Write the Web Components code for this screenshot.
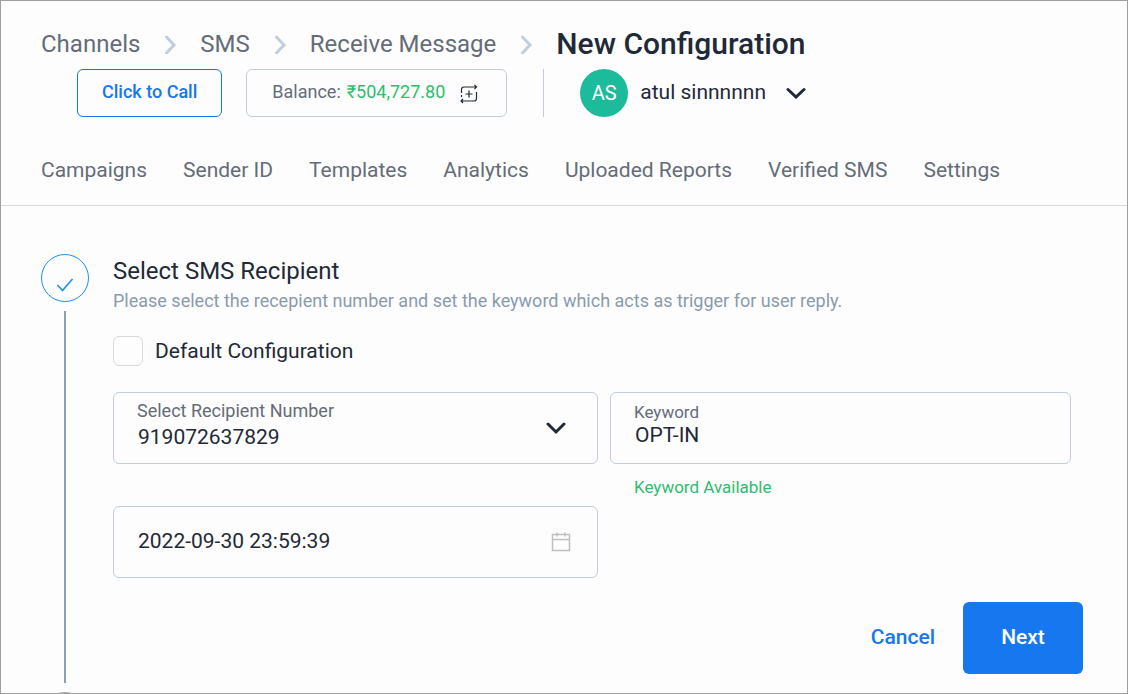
<!DOCTYPE html>
<html lang="en">
<head>
<meta charset="utf-8">
<title>New Configuration</title>
<style>
    body {
        margin: 0;
        background: #fdfdfd;
        color: #1f2937;
        font-family: Roboto, "Liberation Sans", sans-serif;
        font-size: 21px;
        line-height: 24px;
    }
</style>
</head>
<body>
<sms-app></sms-app>

<template id="sms-crumbs">
    <style>
        :host { display: block; }
        nav { display: flex; align-items: center; gap: 24px; height: 46px; padding-bottom: 2px; }
        a { color: #646c78; text-decoration: none; font-size: 24px; white-space: nowrap; }
        h1 { margin: 0; font-size: 30px; font-weight: 500; white-space: nowrap; }
        svg { width: 12px; height: 20px; flex: none; fill: none; stroke: #c3cddb; stroke-width: 3; stroke-linecap: round; }
    </style>
    <nav aria-label="Breadcrumb">
        <a href="#channels">Channels</a>
        <svg viewBox="0 0 12 20"><path d="M2.500 3 L10 11 L2.500 19"/></svg>
        <a href="#sms">SMS</a>
        <svg viewBox="0 0 12 20"><path d="M2.500 3 L10 11 L2.500 19"/></svg>
        <a href="#receive">Receive Message</a>
        <svg viewBox="0 0 12 20"><path d="M2.500 3 L10 11 L2.500 19"/></svg>
        <h1>New Configuration</h1>
    </nav>
</template>

<template id="sms-toolbar">
    <style>
        :host { display: flex; align-items: center; gap: 24px; padding-left: 36px; }
        button { font: inherit; color: inherit; background: none; border: 0; padding: 0; cursor: pointer; }
        .call, .balance {
            display: flex;
            align-items: center;
            box-sizing: border-box;
            height: 48px;
            padding: 0 24px 2px;
            border: 1px solid #c3ccd9;
            border-radius: 6px;
            font-size: 18px;
            white-space: nowrap;
        }
        .call { border-color: #1777ee; color: #1777ee; font-weight: 500; }
        .balance { color: #646c78; padding-left: 25px; padding-right: 27px; }
        .amount { color: #2dbd6e; margin: 0 14px 0 6px; }
        .balance svg { display: block; width: 20px; height: 20px; margin-top: 4px; fill: none; stroke: #1f2937; }
        .user {
            display: flex;
            align-items: center;
            gap: 12px;
            margin-left: 12px;
            padding-left: 36px;
            height: 48px;
            border-left: 1px solid #c3cddb;
            white-space: nowrap;
        }
        .avatar { width: 48px; line-height: 48px; border-radius: 50%; background: #1cbb9b; color: #fff; text-align: center; font-size: 20px; }
        .name { padding-bottom: 2px; }
        .user svg { width: 20px; height: 12px; margin-left: 8px; fill: none; stroke: #1f2937; stroke-width: 3; stroke-linecap: round; }
    </style>
    <button class="call">Click to Call</button>
    <div class="balance">
        <span>Balance:</span>
        <span class="amount">₹504,727.80</span>
        <button aria-label="Recharge">
            <svg viewBox="0 0 20 20" stroke-width="1.2">
                <path d="M2.500 9V5.500Q2.500 3 5 3H17M15.500 1l2 2-2 2M17.500 8v6.500Q17.500 17 15 17H2.500M4 15l-2 2 2 2M2.500 11v2M10 6.500v7M6.500 10h7"/>
            </svg>
        </button>
    </div>
    <button class="user">
        <span class="avatar">AS</span>
        <span class="name">atul sinnnnnn</span>
        <svg viewBox="0 0 20 12"><path d="M2 2.500 L10 10 L18 2.500"/></svg>
    </button>
</template>

<template id="sms-tabs">
    <style>
        :host { display: block; }
        nav { display: flex; gap: 36px; padding: 41px 0 23px; }
        a { color: #646c78; text-decoration: none; white-space: nowrap; }
    </style>
    <nav aria-label="SMS">
        <a href="#campaigns">Campaigns</a>
        <a href="#sender">Sender ID</a>
        <a href="#templates">Templates</a>
        <a href="#analytics">Analytics</a>
        <a href="#reports">Uploaded Reports</a>
        <a href="#verified">Verified SMS</a>
        <a href="#settings">Settings</a>
    </nav>
</template>

<!-- step marker on the left, slotted content on the right -->
<template id="sms-step">
    <style>
        :host { display: grid; grid-template-columns: 48px 1fr; column-gap: 24px; }
        .rail { display: flex; flex-direction: column; align-items: center; }
        .dot {
            display: flex;
            align-items: center;
            justify-content: center;
            box-sizing: border-box;
            width: 48px;
            height: 48px;
            border: 1px solid #1890ff;
            border-radius: 50%;
            flex: none;
        }
        .dot svg { width: 18px; height: 14px; margin-top: 13px; fill: none; stroke: #1890ff; stroke-width: 1.6; }
        .line { flex: 1; width: 2px; margin: 9px 0; background: #8a9fb3; }
        :host([pending]) .dot { border-color: #a6a6a6; }
        :host([pending]) .dot svg, :host([pending]) .line { display: none; }
    </style>
    <div class="rail">
        <div class="dot"><svg viewBox="0 0 18 14"><path d="M1.500 7 L6.500 12.500 L16.500 1"/></svg></div>
        <div class="line"></div>
    </div>
    <div><slot></slot></div>
</template>

<template id="sms-field">
    <style>
        :host { display: block; min-width: 0; }
        .box {
            display: flex;
            align-items: center;
            box-sizing: border-box;
            height: 72px;
            padding: 0 24px 0 23px;
            border: 1px solid #c3ccd9;
            border-radius: 6px;
        }
        .text { flex: 1; min-width: 0; display: flex; flex-direction: column; padding-bottom: 2px; }
        :host([label]) .text { padding-bottom: 10px; }
        :host([type="select"]) .text { padding-bottom: 6px; }
        label { color: #646c78; font-size: 17px; line-height: 24px; }
        :host([type="select"]) label { font-size: 18px; }
        input, select {
            font: inherit;
            color: inherit;
            height: 22px;
            width: 100%;
            box-sizing: border-box;
            margin: 0;
            padding: 0 1px;
            border: 0;
            outline: 0;
            background: none;
            appearance: none;
        }
        select { height: 28px; }
        .help { color: #2dbd6e; font-size: 17px; margin-top: 11px; padding-left: 24px; }
        .help:empty { display: none; }
    </style>
    <div class="box">
        <div class="text"></div>
        <slot name="icon"></slot>
    </div>
    <div class="help"></div>
</template>

<template id="sms-form">
    <style>
        :host { display: block; }
        h2 { margin: 0; padding-top: 3px; font-size: 24px; font-weight: 400; line-height: 28px; }
        p { margin: 4px 0 0; color: #8a9bae; font-size: 18px; }
        .default { display: flex; align-items: center; gap: 12px; margin: 23px 0 26px; }
        .default input {
            appearance: none;
            width: 30px;
            height: 30px;
            margin: 0;
            box-sizing: border-box;
            border: 1px solid #d9d9d9;
            border-radius: 6px;
        }
        .fields { display: grid; grid-template-columns: 1fr 1fr; row-gap: 42px; }
        .fields .keyword { margin: 0 12px; height: 72px; }
        .chevron { width: 20px; height: 14px; margin-right: 7px; fill: none; stroke: #1f2937; stroke-width: 3; stroke-linecap: round; }
        .calendar { width: 20px; height: 20px; margin-right: 2px; fill: none; stroke: #bfbfbf; }
        .actions { display: flex; justify-content: flex-end; gap: 28px; margin: 24px 0 18px; }
        button { border: 0; padding: 0 0 2px; background: none; color: #1777ee; font: inherit; font-weight: 500; cursor: pointer; }
        .next { width: 120px; height: 72px; border-radius: 6px; background: #1777ee; color: #fff; }
    </style>
    <h2>Select SMS Recipient</h2>
    <p>Please select the recepient number and set the keyword which acts as trigger for user reply.</p>
    <div class="default">
        <input type="checkbox" id="default">
        <label for="default">Default Configuration</label>
    </div>
    <div class="fields">
        <sms-field type="select" label="Select Recipient Number" value="919072637829">
            <svg slot="icon" class="chevron" viewBox="0 0 20 14"><path d="M2 3 L10 11 L18 3"/></svg>
        </sms-field>
        <sms-field class="keyword" label="Keyword" value="OPT-IN" help="Keyword Available"></sms-field>
        <sms-field name="Expiry date" value="2022-09-30 23:59:39">
            <svg slot="icon" class="calendar" viewBox="0 0 20 20" stroke-width="1.5"><path d="M1.500 2.500h17v16h-17zM1.500 7.500h17M6 .5v4M14 .5v4"/></svg>
        </sms-field>
    </div>
    <div class="actions">
        <button>Cancel</button>
        <button class="next">Next</button>
    </div>
</template>

<template id="sms-app">
    <style>
        :host {
            display: block;
            box-sizing: border-box;
            height: 100vh;
            overflow: hidden;
            border: 1px solid #a0a0a0;
        }
        header { padding: 20px 40px 0; border-bottom: 1px solid #d9d9d9; }
        main { padding: 48px 44px 0 40px; }
    </style>
    <header>
        <sms-crumbs></sms-crumbs>
        <sms-toolbar></sms-toolbar>
        <sms-tabs></sms-tabs>
    </header>
    <main>
        <sms-step><sms-form></sms-form></sms-step>
        <sms-step pending></sms-step>
    </main>
</template>

<script>
class SmsElement extends HTMLElement {
    constructor() {
        super();
        this.attachShadow({ mode: "open" });
        const template = document.getElementById(this.localName);
        this.shadowRoot.appendChild(template.content.cloneNode(true));
    }
}

class SmsField extends SmsElement {
    connectedCallback() {
        const text = this.shadowRoot.querySelector(".text");
        const value = this.getAttribute("value");
        const label = this.getAttribute("label");
        let control;
        text.textContent = "";

        if (this.getAttribute("type") === "select") {
            control = document.createElement("select");
            control.add(new Option(value, value));
        } else {
            control = document.createElement("input");
            control.type = "text";
            control.value = value;
        }
        control.id = "control";

        if (label) {
            const el = document.createElement("label");
            el.htmlFor = "control";
            el.textContent = label;
            text.appendChild(el);
        } else {
            control.setAttribute("aria-label", this.getAttribute("name"));
        }
        text.appendChild(control);
        this.shadowRoot.querySelector(".help").textContent = this.getAttribute("help") || "";
    }
}

customElements.define("sms-crumbs", class extends SmsElement {});
customElements.define("sms-toolbar", class extends SmsElement {});
customElements.define("sms-tabs", class extends SmsElement {});
customElements.define("sms-step", class extends SmsElement {});
customElements.define("sms-field", SmsField);
customElements.define("sms-form", class extends SmsElement {});
customElements.define("sms-app", class extends SmsElement {});
</script>
</body>
</html>
